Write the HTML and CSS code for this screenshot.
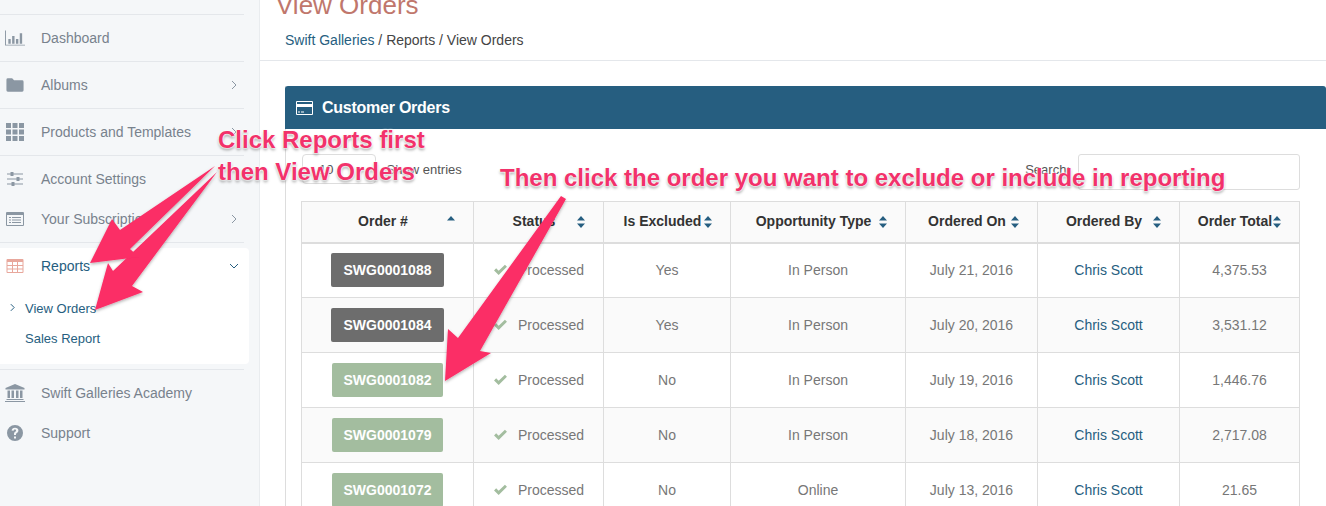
FILE: index.html
```html
<!DOCTYPE html>
<html>
<head>
<meta charset="utf-8">
<title>View Orders</title>
<link rel="stylesheet" href="styles.css">
</head>
<body>
<svg width="0" height="0" class="defs">
  <symbol id="sort" viewBox="0 0 8 12"><path d="M4 0L8 4.6H0zM4 12L0 7.4H8z"/></symbol>
  <symbol id="sortup" viewBox="0 0 8 12"><path d="M4 0L8 4.6H0z"/></symbol>
  <symbol id="check" viewBox="0 0 16 13"><path d="M1 7L3.300 4.700 6 7.400 12.800 .8 15 3 6 12z"/></symbol>
</svg>
<div class="page">
  <aside class="sidebar">
    <ul class="nav">
      <li class="nav-item">
        <svg class="nav-icon" viewBox="0 0 21 16"><path d="M0 0h1v15h20v1H0zM3.500 9h2.500v5H3.500zM7.500 6h2.500v8H7.500zM11.500 9h2.500v5h-2.500zM15.500 3h2.500v11h-2.500z"/></svg>
        <span>Dashboard</span>
      </li>
      <li class="nav-item">
        <svg class="nav-icon" viewBox="-1.500 -2 21 18"><path d="M1.500 0h4.500l2 2h8.500a1.500 1.500 0 0 1 1.500 1.500v9a1.500 1.500 0 0 1-1.500 1.500h-15a1.500 1.500 0 0 1-1.500-1.500v-11a1.500 1.500 0 0 1 1.500-1.500z"/></svg>
        <span>Albums</span>
        <svg class="caret" viewBox="0 0 6 10"><path d="M1 1l4 4-4 4"/></svg>
      </li>
      <li class="nav-item">
        <svg class="nav-icon" viewBox="-1 0 20 18"><path d="M0 0h5v5H0zM6.500 0h5v5h-5zM13 0h5v5h-5zM0 6.500h5v5H0zM6.500 6.500h5v5h-5zM13 6.500h5v5h-5zM0 13h5v5H0zM6.500 13h5v5h-5zM13 13h5v5h-5z"/></svg>
        <span>Products and Templates</span>
        <svg class="caret" viewBox="0 0 6 10"><path d="M1 1l4 4-4 4"/></svg>
      </li>
      <li class="nav-item nav-account">
        <svg class="nav-icon" viewBox="-2 -2 20 18"><path d="M0 1.500h16v1H0zM0 6.500h16v1H0zM0 11.500h16v1H0zM3.500 0h3v4h-3zM9.500 5h3v4h-3zM4.500 10h3v4h-3z"/></svg>
        <span>Account Settings</span>
      </li>
      <li class="nav-item nav-flat nav-last">
        <svg class="nav-icon" viewBox="-1 -2 20 18"><path fill-rule="evenodd" d="M1 0h16a1 1 0 0 1 1 1v12a1 1 0 0 1-1 1H1a1 1 0 0 1-1-1V1a1 1 0 0 1 1-1zM1 3v10h16V3zM3 5h2v1H3zM6 5h9v1H6zM3 7.500h2v1H3zM6 7.500h9v1H6zM3 10h2v1H3zM6 10h9v1H6z"/></svg>
        <span>Your Subscription</span>
        <svg class="caret" viewBox="0 0 6 10"><path d="M1 1l4 4-4 4"/></svg>
      </li>
      <li class="nav-open">
        <div class="nav-item nav-active">
          <svg class="nav-icon icon-red" viewBox="-1.500 -2 20 18"><path fill-rule="evenodd" d="M1 0h15a1 1 0 0 1 1 1v12a1 1 0 0 1-1 1H1a1 1 0 0 1-1-1V1a1 1 0 0 1 1-1zM1 3v3h4.500V3zM6.500 3v3h4V3zM11.500 3v3H16V3zM1 7v2.500h4.500V7zM6.500 7v2.500h4V7zM11.500 7v2.500H16V7zM1 10.500V13h4.500v-2.500zM6.500 10.500V13h4v-2.500zM11.500 10.500V13H16v-2.500z"/></svg>
          <span>Reports</span>
          <svg class="caret caret-down" viewBox="0 0 10 6"><path d="M1 1l4 4 4-4"/></svg>
        </div>
        <div class="sub-item">
          <svg class="sub-caret" viewBox="0 0 6 10"><path d="M1 1l4 4-4 4"/></svg>
          <span>View Orders</span>
        </div>
        <div class="sub-item"><span>Sales Report</span></div>
      </li>
      <li class="nav-item nav-flat nav-academy">
        <svg class="nav-icon" viewBox="0 0 20 18"><path d="M10 0l9.500 4v1.500H.5V4zM2.500 6.500h2.500V14H2.500zM6.500 6.500H9V14H6.500zM11 6.500h2.500V14H11zM15 6.500h2.500V14H15zM1.500 15h17v1h-17zM0 17h20v1H0z"/></svg>
        <span>Swift Galleries Academy</span>
      </li>
      <li class="nav-item nav-flat nav-support">
        <svg class="nav-icon" viewBox="-2 -1 20 18"><path fill-rule="evenodd" d="M8 0a8 8 0 1 1 0 16A8 8 0 0 1 8 0zM7 11.500v2h2v-2zM8 2.700c-2 0-3.200 1.100-3.400 2.800l2 .3c.1-.9.600-1.300 1.300-1.300.7 0 1.200.4 1.200 1 0 .5-.3.800-.9 1.300C7.300 7.500 7 8.100 7 9.200v.8h2v-.5c0-.7.200-1 .9-1.500.9-.7 1.500-1.400 1.500-2.600 0-1.700-1.400-2.700-3.400-2.700z"/></svg>
        <span>Support</span>
      </li>
    </ul>
  </aside>

  <main class="main">
    <header class="page-head">
      <h1 class="page-title">View Orders</h1>
      <div class="crumbs"><a class="link">Swift Galleries</a> / Reports / View Orders</div>
    </header>

    <section class="panel">
      <div class="panel-head">
        <svg class="panel-icon" viewBox="0 0 17 14"><path fill-rule="evenodd" d="M1 0h15a1 1 0 0 1 1 1v12a1 1 0 0 1-1 1H1a1 1 0 0 1-1-1V1a1 1 0 0 1 1-1zM1 1v2h15V1zM1 6v7h15V6zM2 10.500h2v1H2zM5 10.500h3v1H5z"/></svg>
        Customer Orders
      </div>
      <div class="panel-body">
        <div class="controls">
          <div class="length"><span class="select-box">10</span> Show entries</div>
          <div class="search">Search: <span class="search-box"></span></div>
        </div>
        <table class="orders">
          <colgroup>
            <col class="c1"><col class="c2"><col class="c3"><col class="c4"><col class="c5"><col class="c6"><col class="c7">
          </colgroup>
          <thead>
            <tr>
              <th>Order #<svg class="sort"><use href="#sortup"/></svg></th>
              <th>Status<svg class="sort"><use href="#sort"/></svg></th>
              <th>Is Excluded<svg class="sort"><use href="#sort"/></svg></th>
              <th>Opportunity Type<svg class="sort"><use href="#sort"/></svg></th>
              <th>Ordered On<svg class="sort"><use href="#sort"/></svg></th>
              <th>Ordered By<svg class="sort"><use href="#sort"/></svg></th>
              <th>Order Total<svg class="sort"><use href="#sort"/></svg></th>
            </tr>
          </thead>
          <tbody>
            <tr>
              <td><span class="btn btn-gray">SWG0001088</span></td>
              <td class="status"><svg class="check"><use href="#check"/></svg>Processed</td>
              <td>Yes</td><td>In Person</td><td>July 21, 2016</td><td><a class="link">Chris Scott</a></td><td>4,375.53</td>
            </tr>
            <tr>
              <td><span class="btn btn-gray">SWG0001084</span></td>
              <td class="status"><svg class="check"><use href="#check"/></svg>Processed</td>
              <td>Yes</td><td>In Person</td><td>July 20, 2016</td><td><a class="link">Chris Scott</a></td><td>3,531.12</td>
            </tr>
            <tr>
              <td><span class="btn btn-green">SWG0001082</span></td>
              <td class="status"><svg class="check"><use href="#check"/></svg>Processed</td>
              <td>No</td><td>In Person</td><td>July 19, 2016</td><td><a class="link">Chris Scott</a></td><td>1,446.76</td>
            </tr>
            <tr>
              <td><span class="btn btn-green">SWG0001079</span></td>
              <td class="status"><svg class="check"><use href="#check"/></svg>Processed</td>
              <td>No</td><td>In Person</td><td>July 18, 2016</td><td><a class="link">Chris Scott</a></td><td>2,717.08</td>
            </tr>
            <tr>
              <td><span class="btn btn-green">SWG0001072</span></td>
              <td class="status"><svg class="check"><use href="#check"/></svg>Processed</td>
              <td>No</td><td>Online</td><td>July 13, 2016</td><td><a class="link">Chris Scott</a></td><td>21.65</td>
            </tr>
          </tbody>
        </table>
      </div>
    </section>
  </main>
</div>

<!-- annotations drawn over the screenshot -->
<svg class="arrows" viewBox="0 0 1326 506">
  <defs>
    <filter id="arrow-shadow" x="-10%" y="-10%" width="120%" height="120%">
      <feDropShadow dx="0" dy="1.500" stdDeviation="1.500" flood-color="#000" flood-opacity=".3"/>
    </filter>
  </defs>
  <g filter="url(#arrow-shadow)">
    <path d="M217 172L113 271 108 263 95 310 143 292 132 286z"/>
    <path d="M215 166L120 230 112 219 90 263 139 257 130 249z"/>
    <path d="M561 196L566 199 480 351 491 353 445 381 448 329 458 338z"/>
  </g>
</svg>
<div class="note note-one">Click Reports first</div>
<div class="note note-two">then View Orders</div>
<div class="note note-three">Then click the order you want to exclude or include in reporting</div>
</body>
</html>
```

FILE: styles.css
```css
html, body {
	margin: 0;
	height: 506px;
	overflow: hidden;
	background: #fff;
	font-family: "Liberation Sans", Arial, sans-serif;
	font-size: 14px;
	color: #777;
}
.defs {
	position: absolute;
}
.page {
	display: flex;
	height: 506px;
}
.link {
	color: #265e80;
}

/* sidebar */
.sidebar {
	width: 260px;
	flex: none;
	padding-top: 14px;
	box-sizing: border-box;
	background: #f5f7f9;
	border-right: 1px solid #e9ecef;
}
.nav {
	list-style: none;
	margin: 0;
	padding: 0;
	width: 244px;
}
.nav-item {
	display: flex;
	align-items: center;
	height: 46px;
	border-top: 1px solid #e4e7eb;
	color: #78828d;
}
.nav-flat {
	height: 40px;
	border-top: none;
}
.nav-item > span {
	flex: 1;
}
.nav-last {
	height: 41px;
	padding-bottom: 7px;
	box-sizing: border-box;
	border-bottom: 1px solid #e4e7eb;
}
.nav-icon {
	width: 20px;
	height: 18px;
	margin: 0 16px 0 5px;
	flex: none;
	fill: #8b97a3;
}
.nav-icon.icon-red {
	fill: #e8a79c;
}
.caret {
	width: 6px;
	height: 10px;
	margin-right: 7px;
	fill: none;
	stroke: #8b97a3;
	stroke-width: 1;
}
.caret-down {
	width: 10px;
	height: 6px;
	margin-right: 5px;
	stroke: #265e80;
}
.nav-open {
	width: 249px;
	height: 116px;
	margin-top: 5px;
	background: #fff;
	border-radius: 0 4px 4px 0;
}
.nav-active {
	height: 36px;
	border-top: none;
	color: #265e80;
}
.nav-open .caret-down {
	margin-right: 10px;
}
.sub-item {
	display: flex;
	align-items: center;
	height: 30px;
	padding-left: 25px;
	position: relative;
	font-size: 13px;
	color: #265e80;
}
.nav-open .sub-item:nth-child(2) {
	margin-top: 9px;
}
.sub-caret {
	position: absolute;
	left: 10px;
	top: 10px;
	width: 5px;
	height: 9px;
	fill: none;
	stroke: #265e80;
	stroke-width: 1.200;
}
.nav-academy {
	margin-top: 5px;
	height: 46px;
	border-top: 1px solid #e4e7eb;
}
.nav-support {
	height: 33px;
}

/* main column */
.main {
	flex: 1;
	min-width: 0;
}
.page-head {
	display: flow-root;
	height: 60px;
	border-bottom: 1px solid #e4e7eb;
	padding-left: 16px;
}
.page-title {
	margin: -11px 0 0;
	font-size: 26px;
	line-height: 32px;
	font-weight: normal;
	color: #c0776c;
}
.crumbs {
	margin: 9px 0 0 9px;
	line-height: 20px;
	color: #444;
}
.panel {
	margin: 25px 0 0 25px;
	border-left: 1px solid #ddd;
}
.panel-head {
	display: flex;
	align-items: center;
	height: 43px;
	margin-left: -1px;
	padding-left: 11px;
	background: #265e80;
	border-radius: 3px 3px 0 0;
	color: #fff;
	font-size: 16px;
	font-weight: bold;
	letter-spacing: -.25px;
}
.panel-icon {
	width: 17px;
	height: 14px;
	margin-right: 9px;
	fill: #fff;
}
.panel-body {
	padding: 25px 26px 0 15px;
}
.controls {
	display: flex;
	justify-content: space-between;
	height: 47px;
	color: #555;
	font-size: 13px;
}
.length {
	margin-left: 1px;
}
.select-box {
	display: inline-block;
	width: 74px;
	height: 30px;
	line-height: 30px;
	padding-left: 16px;
	margin-right: 7px;
	box-sizing: border-box;
	border: 1px solid #ddd;
	border-radius: 4px;
}
.search {
	display: flex;
	align-items: flex-start;
	line-height: 32px;
}
.search-box {
	display: block;
	width: 222px;
	height: 36px;
	margin-left: 8px;
	box-sizing: border-box;
	border: 1px solid #ddd;
	border-radius: 3px;
}

/* table */
.orders {
	width: 998px;
	table-layout: fixed;
	border-collapse: collapse;
}
.c1 { width: 172px; }
.c2 { width: 130px; }
.c3 { width: 127px; }
.c4 { width: 175px; }
.c5 { width: 132px; }
.c6 { width: 142px; }
.c7 { width: 120px; }
.orders th, .orders td {
	border: 1px solid #ddd;
	text-align: center;
}
.orders th {
	position: relative;
	height: 41px;
	padding: 0 17px 2px 8px;
	box-sizing: border-box;
	background: #fafafa;
	border-bottom: 2px solid #ddd;
	color: #333;
	font-weight: bold;
}
.orders td {
	height: 55px;
	padding: 0;
	box-sizing: border-box;
}
.orders tbody tr:nth-child(even) td {
	background: #fafafa;
}
.sort {
	position: absolute;
	right: 18px;
	top: 14px;
	width: 8px;
	height: 12px;
	fill: #265e80;
}
.btn {
	display: inline-block;
	width: 113px;
	height: 34px;
	line-height: 34px;
	border-radius: 2px;
	color: #fff;
	font-weight: bold;
}
.btn-gray {
	background: #6d6d6d;
}
.btn-green {
	width: 111px;
	background: #a3bd9f;
}
.check {
	width: 15px;
	height: 12px;
	margin-right: 10px;
	vertical-align: -1px;
	fill: #a3bd9f;
}

/* annotations */
.arrows {
	position: absolute;
	left: 0;
	top: 0;
	width: 1326px;
	height: 506px;
	fill: #fb2d66;
}
.note {
	position: absolute;
	font-size: 24px;
	line-height: 28px;
	font-weight: bold;
	white-space: nowrap;
	color: #f2326b;
	text-shadow: 0 0 2px #fff, 0 0 2px #fff, 0 0 2px #fff, 0 2px 3px rgba(0,0,0,.4);
}
.note-one {
	left: 218px;
	top: 126px;
}
.note-two {
	left: 218px;
	top: 158px;
}
.note-three {
	left: 500px;
	top: 164px;
}
```
